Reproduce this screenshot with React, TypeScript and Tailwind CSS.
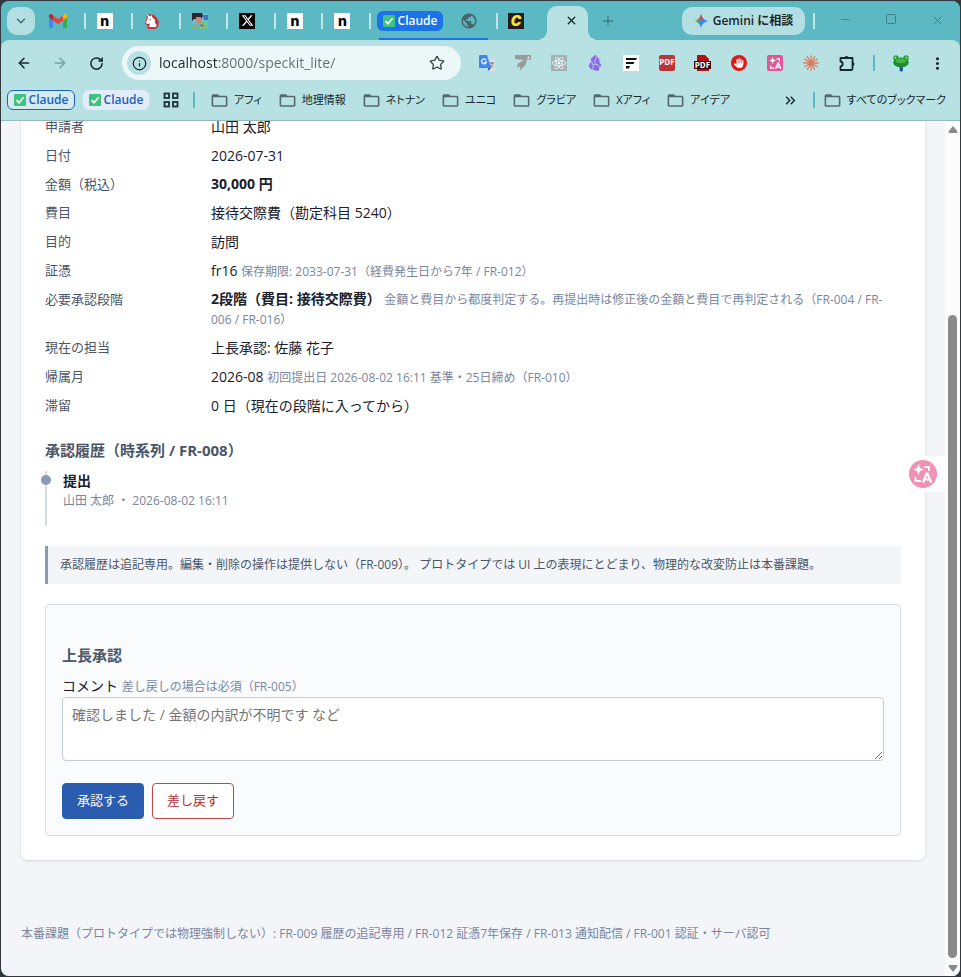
import type { ReactNode } from 'react'
import { ArrowLeft, ArrowRight, ChevronDown, Info, Minus, Plus, RotateCw, Square, Star, X } from 'lucide-react'
import { FaHand, FaReact, FaXTwitter } from 'react-icons/fa6'
import { MdFolderOpen, MdMoreVert, MdOutlineKeyboardDoubleArrowRight, MdPublic } from 'react-icons/md'
import { SiObsidian } from 'react-icons/si'

/* ── Small drawings ── */

function CheckBadge({ size = 12 }: { size?: number }) {
    return (
        <svg width={size} height={size} viewBox="0 0 12 12" className="shrink-0">
            <rect width="12" height="12" rx="1" fill="#3fc380" />
            <path d="M2.6 6.2 5 8.7 9.6 3.2" fill="none" stroke="#fff" strokeWidth="1.7" />
        </svg>
    )
}

function GmailIcon() {
    return (
        <svg width="18" height="14" viewBox="0 0 18 14">
            <path d="M0 3v9.6c0 .8.6 1.4 1.3 1.4H4V5.5z" fill="#4285f4" />
            <path d="M18 3v9.6c0 .8-.6 1.4-1.3 1.4H14V5.5z" fill="#34a853" />
            <path d="M14 1.4v5L18 3.2V2c0-1.7-1.9-2.6-3.2-1.6z" fill="#fbbc04" />
            <path d="M4 6.4v-5l5 3.8 5-3.8v5l-5 3.8z" fill="#ea4335" />
            <path d="M0 2v1.2l4 3.2v-5L3.2.4C1.9-.6 0 .3 0 2z" fill="#c5221f" />
        </svg>
    )
}

function UnicornIcon() {
    return (
        <svg width="16" height="16" viewBox="0 0 16 16">
            <path d="M3 2 5 1l5 1 3 3 2 4-1 5-3 2H4l-1-4-2-1 1-4z" fill="#c8343a" />
            <path d="M4 4.5 3 1l3 2.5L7.5 2 8 4l3 3v3l1.5 1.500L12 14H5l1-3.5-3 .5-1-1.5z" fill="#fff" />
            <circle cx="6" cy="6.8" r=".8" fill="#c8343a" />
        </svg>
    )
}

function PortraitIcon() {
    return (
        <svg width="16" height="16" viewBox="0 0 16 16">
            <rect width="16" height="16" fill="#73b9d4" />
            <path d="M8 8h8v8H5z" fill="#6fc58f" />
            <path d="M11 2h5v5h-4z" fill="#3f74c4" />
            <path d="M0 0h10l1 3-2 3H2L0 8z" fill="#2d2433" />
            <path d="M4 4h5v5l-2 2-3-2z" fill="#c48b79" />
            <path d="M0 12l4-2 4 3v3H0z" fill="#6fb3a0" />
            <path d="M9 11l3 1-1 2-3-1z" fill="#a96458" />
        </svg>
    )
}

function NoteIcon() {
    return (
        <span className="flex size-4 items-center justify-center bg-white font-['Inter',sans-serif] text-sm leading-none font-extrabold text-black">
            n
        </span>
    )
}

function XIcon() {
    return (
        <span className="flex size-4 items-center justify-center bg-black text-white">
            <FaXTwitter size={13} />
        </span>
    )
}

function TabsGridIcon() {
    return (
        <svg width="16" height="16" viewBox="0 0 16 16" fill="none" stroke="#1d3033" strokeWidth="1.8">
            <rect x="1.5" y="1.5" width="4.5" height="4.5" />
            <rect x="10" y="1.5" width="4.5" height="4.5" />
            <rect x="1.5" y="10" width="4.5" height="4.5" />
            <rect x="10" y="10" width="4.5" height="4.5" />
        </svg>
    )
}

function GeminiIcon() {
    return (
        <svg width="14" height="14" viewBox="0 0 14 14">
            <defs>
                <linearGradient id="gem" x1="0" y1="0" x2="1" y2="0">
                    <stop offset="0" stopColor="#f2b705" />
                    <stop offset=".3" stopColor="#4aa564" />
                    <stop offset=".5" stopColor="#3b83f0" />
                    <stop offset="1" stopColor="#3b83f0" />
                </linearGradient>
            </defs>
            <path d="M7 0c.6 3.600 3 6 7 7-4 1-6.400 3.400-7 7-.6-3.600-3-6-7-7 4-1 6.400-3.400 7-7z" fill="url(#gem)" />
            <path d="M7 0c.3 1.800 1 3.300 2 4.400L7 6 5 4.400C6 3.300 6.700 1.800 7 0z" fill="#e8473f" />
        </svg>
    )
}

function GTranslateIcon() {
    return (
        <svg width="16" height="16" viewBox="0 0 16 16">
            <path d="M7 4h8a1 1 0 0 1 1 1v10a1 1 0 0 1-1 1H9z" fill="#dde1e4" />
            <path d="M10 8h5M12.500 7v1M14 8c-.5 2.200-1.800 3.600-3.400 4.500M11 9.500c.8 1.500 2 2.500 3.300 3" stroke="#5d7f90" fill="none" />
            <path d="M1 0h7l4 13H1a1 1 0 0 1-1-1V1a1 1 0 0 1 1-1z" fill="#4285f4" />
            <path d="M9 13h3l-2.500 3z" fill="#2a56c6" />
            <path d="M7.200 5A2.500 2.500 0 1 0 7.500 7H5" stroke="#fff" strokeWidth="1.2" fill="none" />
        </svg>
    )
}

function BirdIcon() {
    return (
        <svg width="16" height="16" viewBox="0 0 16 16">
            <path d="M0 0h16v4.500h-4.500c.3 2.500-.5 5-2.500 7L4.500 16l1-4.500-4 1L3 8.500l6-3.500L0 4z" fill="#9b9a9b" />
            <circle cx="13.5" cy="2.5" r="1" fill="#fff" />
        </svg>
    )
}

function FilterBarsIcon() {
    return (
        <svg width="16" height="16" viewBox="0 0 16 16">
            <rect width="16" height="16" fill="#fff" />
            <path d="M3 3h11l-1 2H3zM3 7h8.500l-1 2H3zM3 11h4l-1 2.500H3z" fill="#111" />
        </svg>
    )
}

function DarkPdfIcon() {
    return (
        <svg width="18" height="16" viewBox="0 0 18 16">
            <path d="M3 0h8l4 4v12H3z" fill="#b20d0d" />
            <rect x="0" y="6" width="17" height="8" fill="#3a0606" />
            <text x="8.5" y="13" textAnchor="middle" fontSize="8" fontWeight="700" fill="#fff" fontFamily="Open Sans, sans-serif">PDF</text>
        </svg>
    )
}

function TranslateGlyph({ size }: { size: number }) {
    return (
        <svg width={size} height={size} viewBox="0 0 20 20" fill="none" stroke="#fff" strokeWidth="1.8">
            <path d="M5.500 0 7 4 11 5.500 7 7 5.500 11 4 7 0 5.500 4 4z" fill="#fff" stroke="none" />
            <path d="M11.500 3h4.500v4M2.500 13v4H8" />
            <path d="M10 18.500 13.700 9.500h.8l3.700 9M11.500 15.500h5.200" strokeWidth="2.2" />
        </svg>
    )
}

function BurstIcon() {
    return (
        <svg width="16" height="16" viewBox="0 0 16 16" stroke="#dc7c5c" strokeWidth="1.3" strokeLinecap="round">
            <path d="M8 .7v14.600M.7 8h14.600M4.300 1.700l7.400 12.600M11.700 1.700 4.300 14.300M1.700 4.300l12.600 7.400M14.300 4.300 1.700 11.700" />
        </svg>
    )
}

function ExtensionsIcon() {
    return (
        <svg width="18" height="18" viewBox="0 0 18 18">
            <path
                d="M2.500 4H14.500V14.800A1.200 1.200 0 0 1 13.300 16H2.500V12.500C5.400 12 5.400 8 2.500 7.500z"
                fill="none" stroke="#16282b" strokeWidth="1.8" strokeLinejoin="round"
            />
            <path d="M6.500 4a2 2 0 0 1 4 0zM14.500 8a2 2 0 0 1 0 4z" fill="#16282b" />
        </svg>
    )
}

function FrogIcon() {
    return (
        <svg width="20" height="20" viewBox="0 0 22 22">
            <circle cx="11" cy="11" r="10" fill="#a4ecef" />
            <path d="M9.500 14h3.500v5l-1.700 2L9.500 19z" fill="#2b4c9a" />
            <circle cx="5.500" cy="5.500" r="3" fill="#2f9c37" />
            <circle cx="16.500" cy="5.500" r="3" fill="#2f9c37" />
            <ellipse cx="11" cy="10.500" rx="8.500" ry="5.500" fill="#23882f" />
            <ellipse cx="11" cy="8.500" rx="6" ry="2.800" fill="#46b53f" />
            <circle cx="5" cy="5" r="1" fill="#c9efb4" />
            <circle cx="17" cy="5" r="1" fill="#c9efb4" />
        </svg>
    )
}

/* ── Browser chrome ── */

const pinnedTabs: { label: string; icon: ReactNode }[] = [
    { label: 'Gmail', icon: <GmailIcon /> },
    { label: 'note', icon: <NoteIcon /> },
    { label: 'Unicorn', icon: <UnicornIcon /> },
    { label: 'Profile', icon: <PortraitIcon /> },
    { label: 'X', icon: <XIcon /> },
    { label: 'note', icon: <NoteIcon /> },
    { label: 'note', icon: <NoteIcon /> },
]

function TabStrip() {
    return (
        <div className="flex h-[39px] items-center bg-[#5cb8c2] pl-[6px]">
            <button aria-label="タブを検索" className="flex size-7 items-center justify-center rounded-[10px] bg-[#b4dfe2] text-[#4b6b70]">
                <ChevronDown size={14} strokeWidth={2.5} />
            </button>
            <div className="ml-[3px] flex w-[333px]">
                {pinnedTabs.map((t, i) => (
                    <button key={i} aria-label={t.label} className="flex h-4 flex-1 items-center border-r-2 border-[#bfe6e9] pl-[11px]">
                        {t.icon}
                    </button>
                ))}
            </div>
            <div className="relative ml-[6px] flex h-full w-[111px] items-center">
                <button className="flex h-5 w-[66px] items-center justify-center gap-[3px] rounded-md bg-[#1a73e8] text-xs font-semibold text-white">
                    <CheckBadge /> Claude
                </button>
                <button aria-label="新しいタブ" className="ml-[17px] text-[#4b6468]">
                    <MdPublic size={18} />
                </button>
                <div className="absolute bottom-0 left-[2px] h-[2px] w-[109px] bg-[#1a73e8]" />
            </div>
            <div className="ml-[8px] h-4 w-[2px] bg-[#bfe6e9]" />
            <button aria-label="C" className="ml-[10px] flex size-4 items-center justify-center bg-[#231a24] font-['Inter',sans-serif] text-sm leading-none font-black text-[#f3ea2c] italic">
                C
            </button>
            {/* active tab, with flared feet */}
            <div className="relative ml-[23px] flex h-[34px] w-[41px] items-center self-end rounded-t-[10px] bg-[#b7e1e3] pb-[6px] pl-[18px]">
                <span className="absolute bottom-0 left-[-10px] size-[10px] bg-[radial-gradient(circle_at_0_0,transparent_10px,#b7e1e3_10px)]" />
                <span className="absolute right-[-10px] bottom-0 size-[10px] bg-[radial-gradient(circle_at_100%_0,transparent_10px,#b7e1e3_10px)]" />
                <button aria-label="タブを閉じる" className="text-[#16282b]"><X size={13} strokeWidth={2.5} /></button>
            </div>
            <button aria-label="新しいタブ" className="ml-[12px] text-[#3c7c85]"><Plus size={16} /></button>
            <div className="flex-1" />
            <button className="flex h-7 w-[123px] items-center justify-center gap-[5px] rounded-[10px] bg-[#b4dfe2] text-xs font-semibold text-[#16282b]">
                <GeminiIcon /> <span>Gemini に相談</span>
            </button>
            <div className="ml-[8px] h-4 w-[2px] bg-[#bfe6e9]" />
            <div className="ml-[7px] flex text-[#3c7c85]">
                <button aria-label="最小化" className="flex w-[46px] justify-center"><Minus size={13} strokeWidth={1.5} /></button>
                <button aria-label="最大化" className="flex w-[46px] justify-center"><Square size={12} strokeWidth={2} /></button>
                <button aria-label="閉じる" className="flex w-[46px] justify-center"><X size={15} strokeWidth={1.5} /></button>
            </div>
        </div>
    )
}

const extensions: { label: string; icon: ReactNode }[] = [
    { label: 'Google 翻訳', icon: <GTranslateIcon /> },
    { label: 'Bird', icon: <BirdIcon /> },
    { label: 'React', icon: <span className="flex size-4 items-center justify-center bg-[#a3b3b5] text-white"><FaReact size={14} /></span> },
    { label: 'Obsidian', icon: <SiObsidian size={16} color="#9068ea" /> },
    { label: 'Filter', icon: <FilterBarsIcon /> },
    { label: 'PDF', icon: <span className="flex size-4 justify-center rounded-xs bg-[#bb3437] pt-[3px] text-[8px] leading-none font-bold text-white">PDF</span> },
    { label: 'PDF', icon: <DarkPdfIcon /> },
    { label: 'AdBlock', icon: <span className="flex size-4 items-center justify-center rounded-full bg-[#e21717] text-white"><FaHand size={10} /></span> },
    { label: '翻訳', icon: <span className="flex size-4 items-center justify-center rounded-xs bg-[#e4559b]"><TranslateGlyph size={13} /></span> },
    { label: 'Claude', icon: <BurstIcon /> },
    { label: '拡張機能', icon: <ExtensionsIcon /> },
]

function Toolbar() {
    return (
        <div className="flex h-[46px] items-center pr-[5px] pl-[5px] text-[#16282b]">
            <button aria-label="戻る" className="flex w-9 justify-center"><ArrowLeft size={16} strokeWidth={2.2} /></button>
            <button aria-label="進む" className="flex w-9 justify-center text-[#7c9ea2]"><ArrowRight size={16} strokeWidth={2.2} /></button>
            <button aria-label="再読み込み" className="flex w-9 justify-center"><RotateCw size={15} strokeWidth={2.4} /></button>
            <div className="ml-2 flex h-[34px] flex-1 items-center rounded-full bg-[#ecf7f8] pr-4 pl-[5px]">
                <button aria-label="サイト情報" className="flex size-6 items-center justify-center rounded-full bg-[#b7e1e3]"><Info size={15} /></button>
                <input
                    aria-label="アドレス"
                    defaultValue="localhost:8000/speckit_lite/"
                    className="ml-2 min-w-0 flex-1 bg-[linear-gradient(90deg,#16282b_58px,#5c6f72_58px)] bg-clip-text text-sm text-transparent caret-black outline-none"
                />
                <button aria-label="ブックマーク" className="text-[#3b4b4e]"><Star size={16} /></button>
            </div>
            <div className="ml-2 flex">
                {extensions.map((e, i) => (
                    <button key={i} aria-label={e.label} className="flex w-9 items-center justify-center">{e.icon}</button>
                ))}
            </div>
            <div className="mx-2 h-4 w-[2px] bg-[#5cb8c2]" />
            <button aria-label="プロフィール" className="flex w-9 justify-center"><FrogIcon /></button>
            <button aria-label="メニュー" className="flex w-9 justify-center"><MdMoreVert size={19} /></button>
        </div>
    )
}

const bookmarks = ['アフィ', '地理情報', 'ネトナン', 'ユニコ', 'グラビア', 'Xアフィ', 'アイデア']

function BookmarkLink({ name }: { name: string }) {
    return (
        <a href="#" className="flex shrink-0 items-center gap-[5px] whitespace-nowrap">
            <MdFolderOpen size={19} color="#55696c" />
            {name}
        </a>
    )
}

function BookmarkBar() {
    return (
        <div className="flex h-[35px] items-center border-b border-[#94b9bd] pr-[14px] pb-[6px] pl-[6px] text-[11px] text-[#16282b] [font-feature-settings:'palt']">
            <button className="flex h-5 w-[68px] items-center justify-center gap-[3px] rounded-md border border-[#1b62c4] bg-[#d3ebf1] text-xs font-semibold text-[#1b5fc0]">
                <CheckBadge /> Claude
            </button>
            <button className="ml-2 flex h-5 w-[66px] items-center justify-center gap-[3px] rounded-md bg-[#e3ecfa] text-xs font-semibold text-[#1b5fc0]">
                <CheckBadge /> Claude
            </button>
            <button aria-label="タブグループ" className="ml-[14px]"><TabsGridIcon /></button>
            <div className="mr-[15px] ml-[14px] h-4 w-[2px] bg-[#5cb8c2]" />
            <nav className="flex gap-4">
                {bookmarks.map(b => <BookmarkLink key={b} name={b} />)}
            </nav>
            <div className="flex-1" />
            <button aria-label="その他のブックマーク"><MdOutlineKeyboardDoubleArrowRight size={17} /></button>
            <div className="mr-2 ml-[14px] h-4 w-[2px] bg-[#5cb8c2]" />
            <BookmarkLink name="すべてのブックマーク" />
        </div>
    )
}

/* ── Page ── */

function Note({ children }: { children: ReactNode }) {
    return <span className="text-xs text-[#7a869e]">{children}</span>
}

const details: { label: string; value: ReactNode; tight?: boolean }[] = [
    { label: '申請者', value: '山田 太郎' },
    { label: '日付', value: '2026-07-31' },
    { label: '金額（税込）', value: <strong>30,000 円</strong>, tight: true },
    { label: '費目', value: '接待交際費（勘定科目 5240）' },
    { label: '目的', value: '訪問' },
    { label: '証憑', value: <>fr16 <Note>保存期限: 2033-07-31（経費発生日から7年 / FR-012）</Note></> },
    {
        label: '必要承認段階',
        value: <><strong>2段階（費目: 接待交際費）</strong> <Note>金額と費目から都度判定する。再提出時は修正後の金額と費目で再判定される（FR-004 / FR-006 / FR-016）</Note></>,
        tight: true,
    },
    { label: '現在の担当', value: '上長承認: 佐藤 花子' },
    { label: '帰属月', value: <>2026-08 <Note>初回提出日 2026-08-02 16:11 基準・25日締め（FR-010）</Note></> },
    { label: '滞留', value: '0 日（現在の段階に入ってから）' },
]

function Details() {
    return (
        <dl className="flex flex-col gap-2">
            {details.map(d => (
                <div key={d.label} className="flex">
                    <dt className="w-[166px] shrink-0 text-[13px] leading-5 text-[#4a5568]">{d.label}</dt>
                    <dd className={d.tight ? 'text-sm leading-5' : 'text-sm leading-[21px]'}>{d.value}</dd>
                </div>
            ))}
        </dl>
    )
}

function History() {
    return (
        <section>
            <h2 className="mt-[22px] text-[15px] leading-6 font-bold text-[#4a5568]">承認履歴（時系列 / FR-008）</h2>
            <ol className="mt-[9px]">
                <li className="relative h-[55px] border-l-2 border-[#d5dae3] pl-4">
                    <span className="absolute top-1 left-[-6px] size-[10px] rounded-full bg-[#8c9ab5]" />
                    <div className="text-sm leading-5 font-bold">提出</div>
                    <div className="text-xs leading-5 text-[#7a869e]">山田 太郎 ・ 2026-08-02 16:11</div>
                </li>
            </ol>
            <p className="mt-5 border-l-[3px] border-[#8c9ab5] bg-[#f3f5f9] px-3 py-[9px] text-xs leading-5 text-[#4a5568]">
                承認履歴は追記専用。編集・削除の操作は提供しない（FR-009）。 プロトタイプでは UI 上の表現にとどまり、物理的な改変防止は本番課題。
            </p>
        </section>
    )
}

function ApprovalForm() {
    return (
        <form className="mt-5 rounded border border-[#d8dde4] bg-[#fafbfd] px-4 pt-[38px] pb-4" onSubmit={e => e.preventDefault()}>
            <h2 className="text-[15px] leading-6 font-bold text-[#4a5568]">上長承認</h2>
            <label htmlFor="comment" className="mt-2 block text-sm leading-[22px]">
                コメント <Note>差し戻しの場合は必須（FR-005）</Note>
            </label>
            <textarea
                id="comment"
                placeholder="確認しました / 金額の内訳が不明です など"
                className="block h-16 w-full rounded border border-[#c5cbd6] bg-white px-[9px] py-[7px] text-sm placeholder:text-[#757575]"
            />
            <div className="mt-[22px] flex gap-2">
                <button type="submit" className="h-9 rounded border border-[#2a5db0] bg-[#2a5db0] px-[14px] text-[13px] text-white">承認する</button>
                <button type="button" className="h-9 rounded border border-[#c0464a] bg-white px-[14px] text-[13px] text-[#b03034]">差し戻す</button>
            </div>
        </form>
    )
}

function ScrollBar() {
    return (
        <div className="flex w-[15px] shrink-0 flex-col items-center bg-[#fcfcfc] pt-[5px] pb-[4px]">
            <svg width="10" height="7" viewBox="0 0 10 7"><path d="M5 0 9.500 5.500 9 7H1L.5 5.500z" fill="#8a8a8a" /></svg>
            <div className="mt-[182px] w-[9px] flex-1 rounded-full bg-[#8a8a8a]" />
            <svg className="mt-[7px]" width="10" height="7" viewBox="0 0 10 7"><path d="M5 7 9.500 1.500 9 0H1L.5 1.500z" fill="#8a8a8a" /></svg>
        </div>
    )
}

export default function App() {
    return (
        <div className="flex min-h-screen flex-col bg-[#33383d] px-px pt-px pb-px font-['Open_Sans','Noto_Sans_CJK_JP',sans-serif] text-[#1a202c]">
            <div className="flex flex-1 flex-col overflow-hidden rounded-lg bg-[#5cb8c2]">
                <TabStrip />
                <header className="rounded-t-lg bg-[#b7e1e3]">
                    <Toolbar />
                    <BookmarkBar />
                </header>
                <div className="relative flex flex-1 bg-[#f3f5f9]">
                    <main className="min-w-0 flex-1 overflow-hidden px-5">
                        <article className="rounded-b-md bg-white px-6 pb-6 shadow-sm">
                            <div className="-mt-[5px]">
                                <Details />
                            </div>
                            <History />
                            <ApprovalForm />
                        </article>
                        <footer className="mt-16 pb-8 text-xs leading-5 text-[#7a869e]">
                            本番課題（プロトタイプでは物理強制しない）: FR-009 履歴の追記専用 / FR-012 証憑7年保存 / FR-013 通知配信 / FR-001 認証・サーバ認可
                        </footer>
                    </main>
                    {/* floating translate handle */}
                    <div className="absolute top-[335px] right-[15px] flex h-9 w-[41px] items-center rounded-l-lg bg-[#fdfdfe] pl-[5px]">
                        <button aria-label="ページを翻訳" className="flex size-7 items-center justify-center rounded-full bg-[#ee93b3]">
                            <TranslateGlyph size={20} />
                        </button>
                    </div>
                    <ScrollBar />
                </div>
            </div>
        </div>
    )
}
